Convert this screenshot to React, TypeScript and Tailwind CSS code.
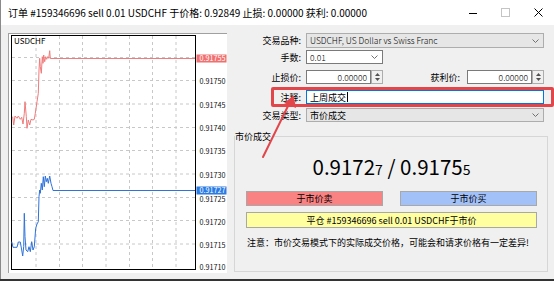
import React from "react";

const redPts =
  "11.7,116.7 12.7,125 14,116 16,118.3 17.3,116 19.3,119.3 20.7,117.3 22,124 23.3,113.3 24,101.7 25.3,116.7 26,128.3 27.3,120 28.7,125 30,119.3 32,120 33.3,119.3 34.3,113.3 36,101.7 37.3,93.3 38,70 38.7,58.3 39.3,66.7 40.3,73.3 41.3,56.7 42,63.3 42.7,55 43.7,61.7 44.7,56.7 45.7,59.3 46.7,56.7 47.7,58.3 48.7,50.7 49.3,58.5 50,58.5 194,58.5";
const bluePts =
  "10.7,241.7 12,247.3 14,247.3 16,247.3 17.3,242 19.3,242 20.7,250 21.7,256 22.7,246.7 23.3,213.3 24,236.7 25,250 26.7,251.7 28,246.7 29.3,251.7 30.7,241.7 32,250 33.3,246.7 34.7,228.3 36,224 37.3,221.7 38,196.7 38.7,190 39.3,193.3 40.3,183.3 41.3,190 42.3,176.7 43.3,186.7 44.3,176 45.3,181.7 46.3,178.3 47.3,183.3 48.7,176 50,183.3 51,186.7 52,190.5 194,190.5";

const prices = [
  { y: 81.5, t: "0.91750" },
  { y: 105, t: "0.91745" },
  { y: 128, t: "0.91740" },
  { y: 151.5, t: "0.91735" },
  { y: 175, t: "0.91730" },
  { y: 199.5, t: "0.91725" },
  { y: 222, t: "0.91720" },
  { y: 245.5, t: "0.91715" },
  { y: 267.5, t: "0.91710" },
];
const hGrid = [57.5, 80.5, 104, 127.5, 150.5, 174, 197.5, 220.5, 244];
const vGrid = [35, 58.5, 81.5, 105, 128.5, 151.5, 175];

function Chevron() {
  return (
    <svg width="7" height="4" viewBox="0 0 7 4">
      <polyline points="0.5,0.5 3.5,3.5 6.5,0.5" fill="none" stroke="#707070" strokeWidth="1" />
    </svg>
  );
}

function Spinner() {
  return (
    <div className="w-[12px] h-full border border-[#adadad] bg-[#f0f0f0] flex flex-col items-center justify-center gap-[2px]">
      <svg width="5" height="3" viewBox="0 0 5 3">
        <polygon points="0,3 2.5,0 5,3" fill="#505050" />
      </svg>
      <svg width="5" height="3" viewBox="0 0 5 3">
        <polygon points="0,0 5,0 2.5,3" fill="#505050" />
      </svg>
    </div>
  );
}

function Chart() {
  return (
    <div className="w-[219px] h-[240px] bg-white border-t border-l border-[#a0a0a0] shrink-0">
      <svg width="218" height="239" viewBox="8 34 218 239" className="block">
        {hGrid.map((y) => (
          <line key={"h" + y} x1="11" x2="194" y1={y} y2={y} stroke="#c8c8c8" strokeWidth="1" strokeDasharray="3 3" />
        ))}
        {vGrid.map((x) => (
          <line key={"v" + x} x1={x} x2={x} y1="36" y2="269" stroke="#c8c8c8" strokeWidth="1" strokeDasharray="3 3" />
        ))}
        <rect x="10.5" y="35.5" width="184" height="234" fill="none" stroke="#000" strokeWidth="1" />
        <text x="13" y="43.5" fontSize="8" fill="#000" fontFamily="'Noto Sans CJK SC', sans-serif">USDCHF</text>
        <polyline points={redPts} fill="none" stroke="#f07b7b" strokeWidth="1" />
        <polyline points={bluePts} fill="none" stroke="#2f72da" strokeWidth="1" />
        {prices.map((p) => (
          <text key={p.t} x="198.5" y={p.y + 2.5} fontSize="7.2" fill="#111" fontFamily="'Noto Sans CJK SC', sans-serif">
            {p.t}
          </text>
        ))}
        <rect x="195.5" y="54.5" width="30" height="8" fill="#f07070" />
        <text x="198.5" y="61" fontSize="7.2" fill="#fff" fontFamily="'Noto Sans CJK SC', sans-serif">0.91755</text>
        <rect x="195.5" y="186.5" width="30" height="8" fill="#2b7be3" />
        <text x="198.5" y="193" fontSize="7.2" fill="#fff" fontFamily="'Noto Sans CJK SC', sans-serif">0.91727</text>
      </svg>
    </div>
  );
}

export default function App() {
  return (
    <div className="relative w-[554px] h-[281px] overflow-hidden bg-[#f0f0f0] text-black font-['Noto_Sans_CJK_SC',sans-serif] flex flex-col">
      {/* title bar */}
      <div className="h-[25px] bg-white flex items-center pl-[7px] pr-[11px] shrink-0 border-l border-[#8a8a8a]">
        <span className="text-[10px] leading-none">订单 #159346696 sell 0.01 USDCHF 于价格: 0.92849 止损: 0.00000 获利: 0.00000</span>
        <div className="ml-auto flex items-center gap-[24px]">
          <svg width="8" height="8" viewBox="0 0 8 8">
            <line x1="0" x2="8" y1="4.5" y2="4.5" stroke="#000" strokeWidth="1" />
          </svg>
          <svg width="9" height="9" viewBox="0 0 9 9">
            <rect x="0.5" y="0.5" width="8" height="8" fill="none" stroke="#c4c4c4" strokeWidth="1" />
          </svg>
          <svg width="9" height="9" viewBox="0 0 9 9">
            <line x1="0.5" y1="0.5" x2="8.5" y2="8.5" stroke="#000" strokeWidth="1" />
            <line x1="8.5" y1="0.5" x2="0.5" y2="8.5" stroke="#000" strokeWidth="1" />
          </svg>
        </div>
      </div>

      {/* body */}
      <div className="flex-1 flex items-start pt-[8px] pl-[7px] border-l border-[#8a8a8a]">
        <Chart />

        <div className="ml-[7px] w-[314px] flex flex-col text-[9px] leading-none">
          {/* row 1 */}
          <div className="flex items-center h-[15px]">
            <div className="w-[67px] text-right">交易品种:</div>
            <div className="ml-[5px] w-[238px] h-full border border-[#adadad] bg-[#e6e6e6] flex items-center justify-between pl-[3px] pr-[4px]">
              <span className="text-[8.5px] font-light">USDCHF, US Dollar vs Swiss Franc</span>
              <Chevron />
            </div>
          </div>
          {/* row 2 */}
          <div className="flex items-center h-[14px] mt-[2px]">
            <div className="w-[67px] text-right">手数:</div>
            <div className="ml-[5px] w-[77px] h-full border border-[#7a7a7a] bg-white flex items-center justify-between pl-[3px] pr-[4px]">
              <span className="text-[8.5px] font-light">0.01</span>
              <Chevron />
            </div>
          </div>
          {/* row 3 */}
          <div className="flex items-center h-[14px] mt-[6px]">
            <div className="w-[67px] text-right">止损价:</div>
            <div className="ml-[5px] w-[65px] h-full border border-[#7a7a7a] bg-white flex items-center justify-end pr-[3px]">
              <span className="text-[8.5px] font-light">0.00000</span>
            </div>
            <Spinner />
            <div className="w-[77px] text-right">获利价:</div>
            <div className="ml-[7px] w-[65px] h-full border border-[#7a7a7a] bg-white flex items-center justify-end pr-[3px]">
              <span className="text-[8.5px] font-light">0.00000</span>
            </div>
            <Spinner />
          </div>
          {/* row 4 */}
          <div className="relative flex items-center h-[14px] mt-[6px]">
            <div className="w-[67px] text-right">注释:</div>
            <div className="ml-[5px] w-[238px] h-full border border-[#0078d7] bg-white flex items-center pl-[3px]">
              <span>上周成交</span>
              <span className="ml-[1px] w-[1px] h-[10px] bg-black" />
            </div>
            <div className="absolute left-[37px] -top-[3px] w-[283px] h-[20px] border-[3px] border-[#e2464b] rounded-[2px] pointer-events-none" />
          </div>
          {/* row 5 */}
          <div className="flex items-center h-[14px] mt-[4px]">
            <div className="w-[67px] text-right">交易类型:</div>
            <div className="ml-[5px] w-[238px] h-full border border-[#adadad] bg-[#e6e6e6] flex items-center justify-between pl-[3px] pr-[4px]">
              <span>市价成交</span>
              <Chevron />
            </div>
          </div>

          {/* group box */}
          <div className="relative mt-[14px] h-[136px] border border-[#d6d6d6] flex flex-col pl-[11px] pr-[10px]">
            <span className="absolute -top-[6px] left-0 bg-[#f0f0f0] pr-[1px] leading-[11px]">市价成交</span>
            <div className="mt-[19px] h-[22px] flex items-baseline justify-center leading-none">
              <span className="text-[20.5px]">0.9172</span>
              <span className="text-[14px]">7</span>
              <span className="text-[20.5px]">&nbsp;/&nbsp;0.9175</span>
              <span className="text-[14px]">5</span>
            </div>
            <div className="mt-[13px] flex justify-between">
              <div className="w-[137px] h-[15px] border border-[#a8a8a8] bg-[#f98282] flex items-center justify-center">于市价卖</div>
              <div className="w-[137px] h-[15px] border border-[#a8a8a8] bg-[#a3c1f9] flex items-center justify-center">于市价买</div>
            </div>
            <div className="mt-[6px] h-[16px] border border-[#a8a8a8] bg-[#ffffa0] flex items-center justify-center">
              平仓 #159346696 sell 0.01 USDCHF于市价
            </div>
            <div className="mt-[10px] pl-[1px]">注意：市价交易模式下的实际成交价格，可能会和请求价格有一定差异!</div>
          </div>
        </div>
      </div>

      {/* bottom strip */}
      <div className="h-[2px] bg-[#333333] shrink-0" />

      {/* arrow annotation */}
      <svg className="absolute left-0 top-0 pointer-events-none" width="554" height="281" viewBox="0 0 554 281">
        <line x1="263" y1="157" x2="289" y2="104" stroke="#e2464b" strokeWidth="2" strokeLinecap="round" />
        <polygon points="293.5,95.5 296,108 284,103" fill="#e2464b" />
      </svg>
    </div>
  );
}
